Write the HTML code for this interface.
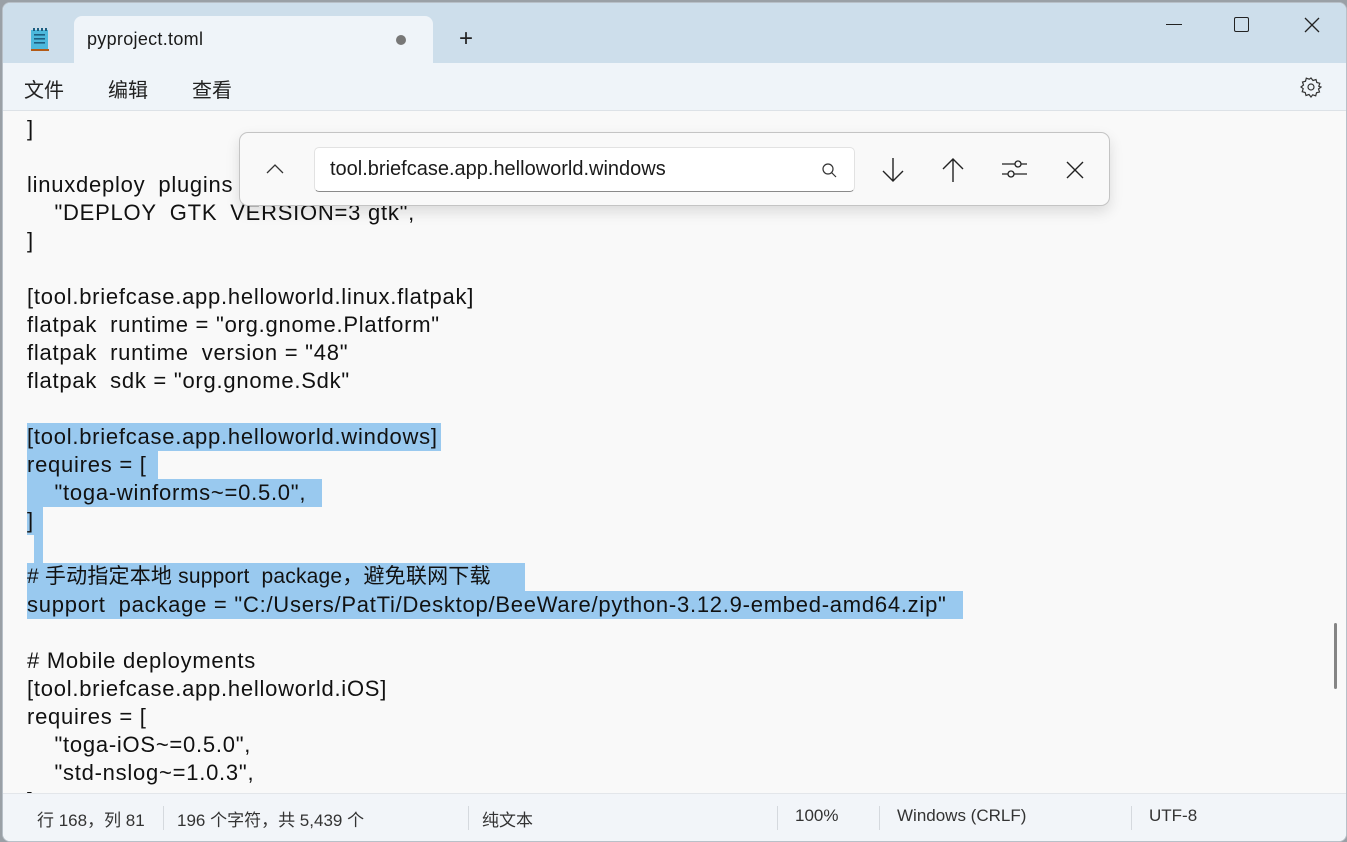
<!DOCTYPE html>
<html><head><meta charset="utf-8"><style>
*{margin:0;padding:0;box-sizing:border-box}
body{width:1347px;height:842px;overflow:hidden;background:#9aa0a6;font-family:"Liberation Sans","Noto Sans CJK SC",sans-serif;position:relative}
.win{position:absolute;left:2px;top:2px;width:1345px;height:840px;background:#f9f9f9;border-radius:8px;overflow:hidden;border:1px solid #b8c0c8}
.title{position:absolute;left:0;top:0;width:100%;height:61px;background:#cddeeb}
.tab{position:absolute;left:71px;top:13px;width:359px;height:50px;background:#eff4f9;border-radius:8px 8px 0 0}
.menu{position:absolute;left:0;top:60px;width:100%;height:48px;background:#eff4f9;border-bottom:1px solid #dde2e7}
.ed{position:absolute;left:0;top:0;width:100%;height:100%}
.ln{position:absolute;left:24px;height:28px;line-height:28px;font-size:22px;letter-spacing:0.75px;color:#111;white-space:pre}
.u{opacity:0}
.hl{position:absolute;background:#99c9ef;height:28px}
.status{position:absolute;left:0;top:790px;width:100%;height:50px;background:#f2f5f9;border-top:1px solid #e3e6ea;font-size:17px;color:#333}
.status span{position:absolute;top:12px}
.sep{position:absolute;top:12px;width:1px;height:24px;background:#d5d9de}
.find{position:absolute;left:236px;top:129px;width:871px;height:74px;background:#f9f9f9;border:1.5px solid #c4c4c4;border-radius:9px;box-shadow:0 6px 14px rgba(0,0,0,.12)}
.inp{position:absolute;left:74px;top:14px;width:541px;height:45px;background:#fff;border:1px solid #e2e2e2;border-bottom:1.5px solid #8a8a8a;border-radius:5px;font-size:20px;line-height:43px;padding-left:15px;color:#1a1a1a}
</style></head><body>
<div class="win">
<div class="title">
 <svg style="position:absolute;left:27px;top:24px" width="20" height="26" viewBox="0 0 20 26"><rect x="1" y="3" width="17" height="19" fill="#4cb8dc"/><rect x="3" y="1" width="2" height="3" fill="#1d5e80"/><rect x="7" y="1" width="2" height="3" fill="#1d5e80"/><rect x="11" y="1" width="2" height="3" fill="#1d5e80"/><rect x="15" y="1" width="2" height="3" fill="#1d5e80"/><rect x="4" y="7" width="11" height="1.6" fill="#1d5e80"/><rect x="4" y="11" width="11" height="1.6" fill="#1d5e80"/><rect x="4" y="15" width="11" height="1.6" fill="#1d5e80"/><rect x="1" y="22" width="18" height="2" fill="#b35a16"/></svg>
 <div class="tab"><span style="position:absolute;left:13px;top:13px;font-size:18px;color:#1a1a1a;letter-spacing:0.3px">pyproject.toml</span><span style="position:absolute;left:322px;top:19px;width:10px;height:10px;border-radius:50%;background:#777"></span></div>
 <span style="position:absolute;left:456px;top:22px;font-size:24px;color:#222;font-weight:300">+</span>
 <div style="position:absolute;left:1163px;top:21px;width:16px;height:1.2px;background:#222"></div>
 <div style="position:absolute;left:1231px;top:14px;width:15px;height:15px;border:1.3px solid #222;border-radius:2px"></div>
 <svg style="position:absolute;left:1301px;top:14px" width="16" height="16"><path d="M1 1L15 15M15 1L1 15" stroke="#222" stroke-width="1.3"/></svg>
</div>
<div class="menu">
 <span style="position:absolute;left:21px;top:11px;font-size:20px;color:#222">文件</span>
 <span style="position:absolute;left:105px;top:11px;font-size:20px;color:#222">编辑</span>
 <span style="position:absolute;left:189px;top:11px;font-size:20px;color:#222">查看</span>
 <svg style="position:absolute;left:1297px;top:13px" width="22" height="22" viewBox="0 0 22 22"><path d="M11 2l2 2.5 3-1 .8 3 3 .8-1 3L21 11l-2.5 2 1 3-3 .8-.8 3-3-1L11 21l-2-2.5-3 1-.8-3-3-.8 1-3L1 11l2.5-2-1-3 3-.8.8-3 3 1z" fill="none" stroke="#333" stroke-width="1.2"/><circle cx="11" cy="11" r="3" fill="none" stroke="#333" stroke-width="1.2"/></svg>
</div>
<div class="ed">
 <div class="hl" style="left:24px;top:420px;width:414px"></div>
 <div class="hl" style="left:24px;top:448px;width:131px"></div>
 <div class="hl" style="left:24px;top:476px;width:295px"></div>
 <div class="hl" style="left:24px;top:504px;width:16px"></div>
 <div class="hl" style="left:31px;top:532px;width:9px"></div>
 <div class="hl" style="left:24px;top:560px;width:498px"></div>
 <div class="hl" style="left:24px;top:588px;width:936px"></div>
 <div class="ln" style="top:112px">]</div>
 <div class="ln" style="top:168px">linuxdeploy<span class="u">_</span>plugins = [</div>
 <div class="ln" style="top:196px">    "DEPLOY<span class="u">_</span>GTK<span class="u">_</span>VERSION=3 gtk",</div>
 <div class="ln" style="top:224px">]</div>
 <div class="ln" style="top:280px">[tool.briefcase.app.helloworld.linux.flatpak]</div>
 <div class="ln" style="top:308px">flatpak<span class="u">_</span>runtime = "org.gnome.Platform"</div>
 <div class="ln" style="top:336px">flatpak<span class="u">_</span>runtime<span class="u">_</span>version = "48"</div>
 <div class="ln" style="top:364px">flatpak<span class="u">_</span>sdk = "org.gnome.Sdk"</div>
 <div class="ln" style="top:420px">[tool.briefcase.app.helloworld.windows]</div>
 <div class="ln" style="top:448px">requires = [</div>
 <div class="ln" style="top:476px">    "toga-winforms~=0.5.0",</div>
 <div class="ln" style="top:504px">]</div>
 <div class="ln" style="top:560px;letter-spacing:0.2px;font-size:21px"># 手动指定本地 support<span class="u">_</span>package，避免联网下载</div>
 <div class="ln" style="top:588px">support<span class="u">_</span>package = "C:/Users/PatTi/Desktop/BeeWare/python-3.12.9-embed-amd64.zip"</div>
 <div class="ln" style="top:644px"># Mobile deployments</div>
 <div class="ln" style="top:672px">[tool.briefcase.app.helloworld.iOS]</div>
 <div class="ln" style="top:700px">requires = [</div>
 <div class="ln" style="top:728px">    "toga-iOS~=0.5.0",</div>
 <div class="ln" style="top:756px">    "std-nslog~=1.0.3",</div>
 <div class="ln" style="top:784px">]</div>
 <div style="position:absolute;left:1331px;top:620px;width:3px;height:66px;background:#858585;border-radius:2px"></div>
</div>
<div class="find">
 <svg style="position:absolute;left:26px;top:30px" width="18" height="12"><path d="M1 10L9 2L17 10" fill="none" stroke="#333" stroke-width="1.3"/></svg>
 <div class="inp">tool.briefcase.app.helloworld.windows
  <svg style="position:absolute;left:506px;top:14px" width="18" height="18"><circle cx="7" cy="7" r="5" fill="none" stroke="#333" stroke-width="1.2"/><path d="M10.5 10.5L15 15" stroke="#333" stroke-width="1.2"/></svg>
 </div>
 <svg style="position:absolute;left:640px;top:24px" width="26" height="26"><path d="M13 1V24M3 14L13 24L23 14" fill="none" stroke="#222" stroke-width="1.4"/></svg>
 <svg style="position:absolute;left:700px;top:24px" width="26" height="26"><path d="M13 25V2M3 12L13 2L23 12" fill="none" stroke="#222" stroke-width="1.4"/></svg>
 <svg style="position:absolute;left:762px;top:26px" width="26" height="24"><path d="M0 5H13M19 5H25M0 15H6M12 15H25" stroke="#222" stroke-width="1.3"/><circle cx="16" cy="5" r="3" fill="none" stroke="#222" stroke-width="1.3"/><circle cx="9" cy="15" r="3" fill="none" stroke="#222" stroke-width="1.3"/></svg>
 <svg style="position:absolute;left:826px;top:28px" width="18" height="18"><path d="M1 1L17 17M17 1L1 17" stroke="#222" stroke-width="1.4"/></svg>
</div>
<div class="status">
 <span style="left:34px">行 168，列 81</span><div class="sep" style="left:160px"></div>
 <span style="left:174px">196 个字符，共 5,439 个</span><div class="sep" style="left:465px"></div>
 <span style="left:479px">纯文本</span><div class="sep" style="left:774px"></div>
 <span style="left:792px">100%</span><div class="sep" style="left:876px"></div>
 <span style="left:894px">Windows (CRLF)</span><div class="sep" style="left:1128px"></div>
 <span style="left:1146px">UTF-8</span>
</div>
</div>
</body></html>
